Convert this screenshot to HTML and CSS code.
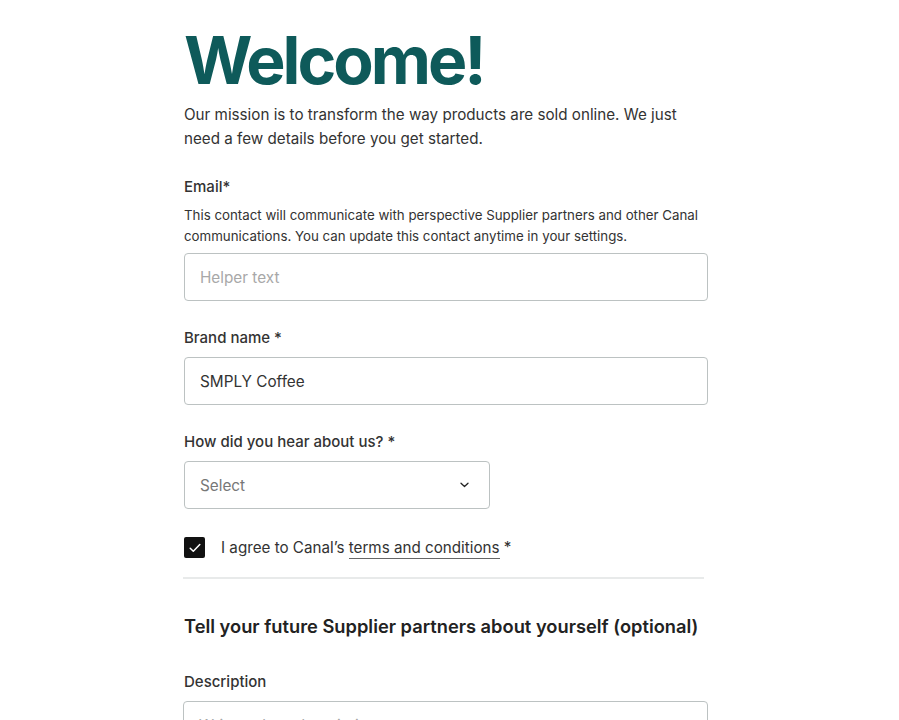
FILE: index.html
```html
<!DOCTYPE html>
<html lang="en">
<head>
<meta charset="utf-8">
<title>Welcome</title>
<link rel="stylesheet" href="styles.css">
</head>
<body>
<main class="page">
  <h1 class="title">Welcome!</h1>
  <p class="intro">Our mission is to transform the way products are sold online. We just need a few details before you get started.</p>

  <div class="field field-email">
    <label class="label">Email*</label>
    <p class="help">This contact will communicate with perspective Supplier partners and other Canal communications. You can update this contact anytime in your settings.</p>
    <div class="input placeholder">Helper text</div>
  </div>

  <div class="field field-brand">
    <label class="label">Brand name *</label>
    <div class="input">SMPLY Coffee</div>
  </div>

  <div class="field field-source">
    <label class="label">How did you hear about us? *</label>
    <div class="input select placeholder-dark">
      <span>Select</span>
      <svg class="chev" width="9" height="6" viewBox="0 0 9 6"><path d="M1 1.2l3.5 3.3 3.5-3.3" fill="none" stroke="#222" stroke-width="1.3" stroke-linecap="round" stroke-linejoin="round"/></svg>
    </div>
  </div>

  <div class="agree">
    <span class="checkbox"><svg width="14" height="12" viewBox="0 0 14 12"><path d="M2.2 6.2l3.1 3.1L11.8 2.6" fill="none" stroke="#fff" stroke-width="1.5" stroke-linecap="round" stroke-linejoin="round"/></svg></span>
    <span class="agree-text">I agree to Canal’s <a class="link">terms and conditions</a> *</span>
  </div>

  <hr class="divider">

  <h2 class="section">Tell your future Supplier partners about yourself (optional)</h2>

  <div class="field field-desc">
    <label class="label">Description</label>
    <div class="input textarea placeholder">Write a short description</div>
  </div>
</main>
</body>
</html>
```
FILE: styles.css
```css
html, body {
  margin: 0;
  padding: 0;
  background: #fff;
}
body {
  font-family: "Inter", "Liberation Sans", sans-serif;
  color: #333;
  overflow: hidden;
}
.page {
  width: 524px;
  margin-left: 184px;
  padding-top: 22px;
}
.title {
  margin: 0;
  font-size: 66px;
  line-height: 76px;
  font-weight: 700;
  color: #0e5a5a;
  letter-spacing: -3px;
}
.intro {
  margin: 5px 0 0;
  font-size: 15.2px;
  line-height: 24px;
  color: #333;
}
.field {
  display: flex;
  flex-direction: column;
}
.field-email {
  margin-top: 25px;
}
.field-brand {
  margin-top: 26px;
}
.field-source {
  margin-top: 26px;
}
.field-desc {
  margin-top: 32px;
}
.label {
  font-size: 15px;
  line-height: 22px;
  font-weight: 500;
  color: #333;
}
.field .label + .input {
  margin-top: 8px;
}
.help {
  margin: 7px 0 6px;
  font-size: 13.3px;
  line-height: 21px;
  color: #333;
}
.input {
  box-sizing: border-box;
  height: 48px;
  border: 1px solid #bcc2c2;
  border-radius: 4px;
  padding: 0 15px;
  display: flex;
  align-items: center;
  font-size: 15.3px;
  color: #333;
}
.placeholder {
  color: #a8a8a8;
}
.placeholder-dark {
  color: #777;
}
.field .select {
  width: 306px;
  justify-content: space-between;
  padding-right: 20px;
  margin-top: 9px;
}
.chev {
  display: block;
}
.agree {
  display: flex;
  align-items: center;
  gap: 16px;
  margin-top: 28px;
}
.checkbox {
  width: 21px;
  height: 21px;
  background: #111;
  border-radius: 2px;
  display: flex;
  align-items: center;
  justify-content: center;
}
.agree-text {
  font-size: 15.2px;
  color: #333;
}
.link {
  color: #333;
  text-decoration: none;
  border-bottom: 1px solid #666;
  padding-bottom: 1px;
}
.divider {
  margin: 19px 0 0 -1px;
  width: 521px;
  border: 0;
  border-top: 2px solid #e8eaea;
}
.section {
  margin: 34px 0 0;
  font-size: 18.3px;
  line-height: 26px;
  font-weight: 600;
  color: #222;
}
.textarea {
  height: 100px;
  align-items: flex-start;
  padding-top: 14px;
  margin-left: -1px;
}
```
